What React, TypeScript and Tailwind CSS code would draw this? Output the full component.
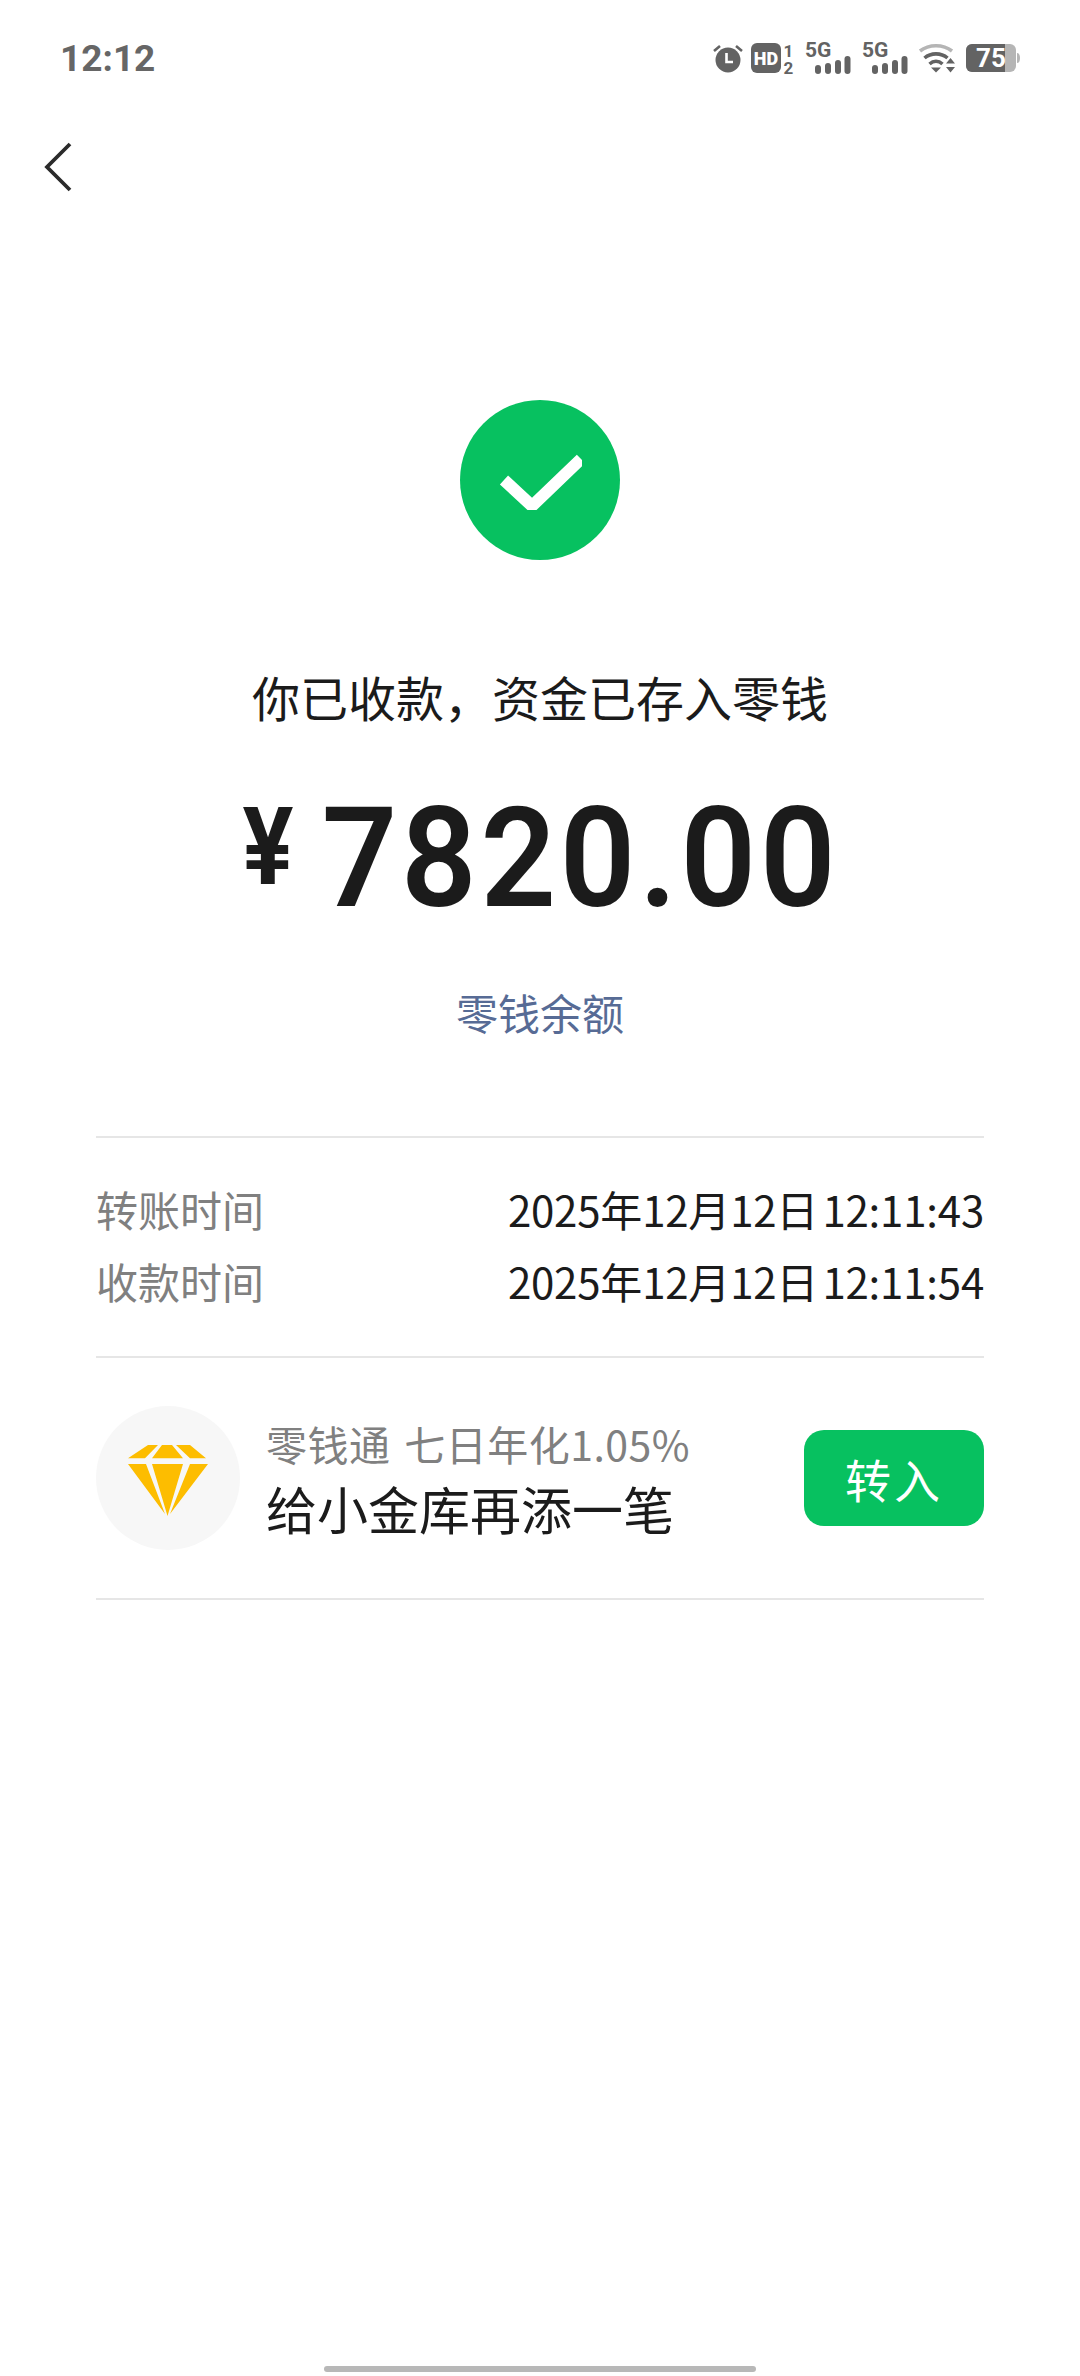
const CJK = "font-['Noto_Sans_CJK_SC','Noto_Sans',sans-serif]";

function Alarm() {
  return (
    <svg width="32" height="30" viewBox="0 0 32 30" className="mr-[-3px]">
      <circle cx="16" cy="17" r="12.5" fill="#636363" />
      <path d="M14.5 10v9h6.5" fill="none" stroke="#fff" strokeWidth="2.6" />
      <path d="M2 8l6-5M30 8l-6-5" stroke="#636363" strokeWidth="2.6" fill="none" />
    </svg>
  );
}

function HD() {
  return (
    <svg width="44" height="32" viewBox="0 0 44 32" className="overflow-visible">
      <rect x="0" y="1" width="30" height="30" rx="6" fill="#636363" />
      <text x="15" y="22.5" textAnchor="middle" fontSize="18" fontWeight="900" fill="#fff" fontFamily="Roboto, sans-serif">HD</text>
      <text x="37.5" y="14.5" textAnchor="middle" fontSize="17" fontWeight="700" fill="#636363" fontFamily="Roboto, sans-serif">1</text>
      <text x="37.5" y="31.5" textAnchor="middle" fontSize="17" fontWeight="700" fill="#636363" fontFamily="Roboto, sans-serif">2</text>
    </svg>
  );
}

function Signal() {
  return (
    <svg width="46" height="32" viewBox="0 0 46 32" className="overflow-visible">
      <text x="0" y="15" fontSize="21" fontWeight="700" fill="#636363" fontFamily="Roboto, sans-serif">5G</text>
      <rect x="10" y="23" width="6" height="9" rx="3" fill="#636363" />
      <rect x="20" y="21" width="6" height="11" rx="3" fill="#636363" />
      <rect x="30" y="18" width="6" height="14" rx="3" fill="#636363" />
      <rect x="39.5" y="14" width="6" height="18" rx="3" fill="#636363" />
    </svg>
  );
}

function Wifi() {
  return (
    <svg width="38" height="30" viewBox="0 0 38 30">
      <path d="M2 8C11 1 25 1 34 8" fill="none" stroke="#b5b5b5" strokeWidth="3.6" />
      <path d="M6.5 15C13 9.5 23 9.5 29.5 15" fill="none" stroke="#636363" strokeWidth="3.6" />
      <path d="M11.5 21C15.5 17.5 20.5 17.5 24.5 21" fill="none" stroke="#636363" strokeWidth="3.6" />
      <path d="M13 24.5h10L18 29.5z" fill="#636363" />
      <path d="M28 20.5h9l-4.5-5.5zM28 24h9l-4.5 5.5z" fill="#636363" />
    </svg>
  );
}

function Battery() {
  return (
    <svg width="54" height="28" viewBox="0 0 54 28" className="overflow-visible">
      <rect x="0" y="0" width="50" height="28" rx="6" fill="#b5b5b5" />
      <path d="M6 0H39V28H6a6 6 0 0 1-6-6V6a6 6 0 0 1 6-6z" fill="#636363" />
      <path d="M51 9c2 0 3 2 3 5s-1 5-3 5z" fill="#b5b5b5" />
      <text x="25" y="23" textAnchor="middle" fontSize="26" fontWeight="700" fill="#fff" fontFamily="Roboto, sans-serif">75</text>
    </svg>
  );
}

function Diamond() {
  return (
    <svg width="80" height="72" viewBox="0 0 80 72" className="mt-[6px]">
      <path d="M20 0H30L17 13.3H0zM34 0H44L55 13.3H24zM48 0H62L78 13.3H62z" fill="#fdbd00" />
      <path d="M0 19H18L37 69zM24 19H55L39.5 71zM62 19H80L42 69z" fill="#fdbd00" />
    </svg>
  );
}

function Row({ label, value }: { label: string; value: string }) {
  return (
    <div className="flex h-[72px] items-center justify-between">
      <span className="text-[42px] leading-none text-[#808080]">{label}</span>
      <span className="text-[42px] leading-none tracking-[-0.2px] text-[#1b1b1b] [word-spacing:-5px]">{value}</span>
    </div>
  );
}

export default function App() {
  return (
    <div className={`relative flex h-[2376px] w-[1080px] flex-col overflow-hidden bg-white ${CJK}`}>
      <div className="flex h-[116px] items-center justify-between pl-[60px] pr-[60px]">
        <span className="font-['Roboto',sans-serif] text-[37px] font-bold leading-none text-[#666666]">12:12</span>
        <div className="flex items-center gap-[10px]">
          <Alarm />
          <HD />
          <div className="flex items-center gap-[11px]">
            <Signal />
            <Signal />
          </div>
          <Wifi />
          <Battery />
        </div>
      </div>

      <div className="mt-[25px] flex h-[52px] items-center pl-[44px]">
        <svg width="28" height="52" viewBox="0 0 28 52">
          <path d="M26 3L3 26l23 23" fill="none" stroke="#2b2b2b" strokeWidth="3.8" />
        </svg>
      </div>

      <div className="mt-[207px] flex justify-center">
        <div className="flex h-[160px] w-[160px] items-center justify-center rounded-full bg-[#07c160]">
          <svg width="84" height="60" viewBox="-3 -3 84 60">
            <path d="M3 27L31 53L80 6" fill="none" stroke="#fff" strokeWidth="12" />
          </svg>
        </div>
      </div>

      <p className="mt-[104px] text-center text-[48px] leading-[64px] text-[#1b1b1b]">{"你已收款\uFF0C资金已存入零钱"}</p>

      <div className="mt-[65px] flex h-[130px] items-center justify-center pr-[3px] font-['Roboto',sans-serif] text-[#1b1b1b]">
        <span className="mb-[22px] flex w-[50px] scale-x-[0.88] justify-center text-[108px] font-bold leading-none">¥</span>
        <span className="ml-[34px] flex w-[507px] scale-x-[0.945] justify-center whitespace-nowrap text-[140px] font-semibold leading-none tracking-[4px]">7820.00</span>
      </div>

      <p className="mt-[61px] text-center text-[42px] leading-[56px] text-[#576b95]">零钱余额</p>

      <div className="mx-[96px] mt-[96px] border-y-2 border-[#e6e6e6] pb-[39px] pt-[35px]">
        <Row label="转账时间" value="2025年12月12日 12:11:43" />
        <Row label="收款时间" value="2025年12月12日 12:11:54" />
      </div>

      <div className="mx-[96px] flex h-[242px] items-center border-b-2 border-[#e6e6e6]">
        <div className="flex h-[144px] w-[144px] shrink-0 items-center justify-center rounded-full bg-[#f7f7f7]">
          <Diamond />
        </div>
        <div className="ml-[26px] flex-1">
          <div className="text-[41px] leading-[60px] tracking-[0.5px] text-[#808080] [word-spacing:4px]">零钱通 七日年化1.05%</div>
          <div className="text-[51px] leading-[70px] text-[#1b1b1b]">给小金库再添一笔</div>
        </div>
        <div className="flex h-[96px] w-[180px] items-center justify-center rounded-[20px] bg-[#07c160] text-[46px] tracking-[3px] text-white">转入</div>
      </div>

      <div className="absolute bottom-[4px] left-[324px] h-[6px] w-[432px] rounded-full bg-[#b8b8b8]" />
    </div>
  );
}
